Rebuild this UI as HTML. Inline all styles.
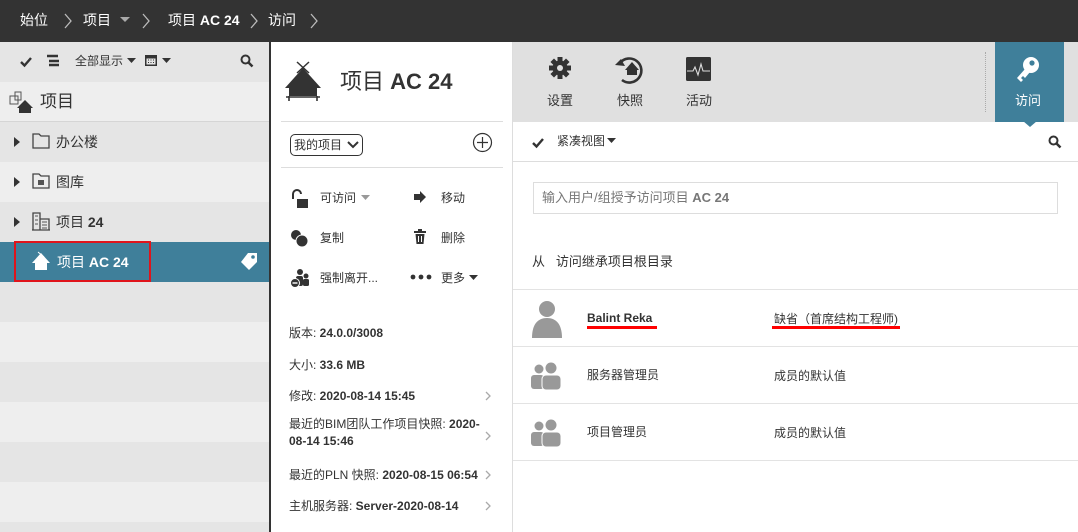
<!DOCTYPE html>
<html><head><meta charset="utf-8"><style>
*{margin:0;padding:0;box-sizing:border-box}
body{width:1078px;height:532px;overflow:hidden;position:relative;background:#fff;font-family:"Liberation Sans","Noto Sans CJK SC",sans-serif;color:#333;font-size:13px}
.a{position:absolute;white-space:nowrap}
b{font-weight:bold}
</style></head><body>
<!-- top bar -->
<div class="a" style="left:0;top:0;width:1078px;height:42px;background:#333"></div>
<div class="a" style="left:20px;top:10px;color:#fff;font-size:14px;line-height:20px">始位</div>
<svg class="a" style="left:62px;top:12px" width="12" height="18"><path d="M3 2l6 7-6 7" stroke="#bbb" stroke-width="1.3" fill="none"/></svg>
<div class="a" style="left:83px;top:10px;color:#fff;font-size:14px;line-height:20px">项目</div>
<svg class="a" style="left:119px;top:16px" width="12" height="8"><path d="M1 1h10L6 6z" fill="#aaa"/></svg>
<svg class="a" style="left:140px;top:12px" width="12" height="18"><path d="M3 2l6 7-6 7" stroke="#bbb" stroke-width="1.3" fill="none"/></svg>
<div class="a" style="left:168px;top:10px;color:#fff;font-size:14px;line-height:20px">项目 <b>AC 24</b></div>
<svg class="a" style="left:248px;top:12px" width="12" height="18"><path d="M3 2l6 7-6 7" stroke="#bbb" stroke-width="1.3" fill="none"/></svg>
<div class="a" style="left:268px;top:10px;color:#fff;font-size:14px;line-height:20px">访问</div>
<svg class="a" style="left:308px;top:12px" width="12" height="18"><path d="M3 2l6 7-6 7" stroke="#bbb" stroke-width="1.3" fill="none"/></svg>

<!-- left panel -->
<div class="a" style="left:0;top:42px;width:269px;height:40px;background:#e5e5e5"></div>
<div class="a" style="left:0;top:82px;width:269px;height:40px;background:#eee;border-bottom:1px solid #d5d5d5"></div>
<div class="a" style="left:0;top:122px;width:269px;height:40px;background:#e5e5e5"></div>
<div class="a" style="left:0;top:162px;width:269px;height:40px;background:#eee"></div>
<div class="a" style="left:0;top:202px;width:269px;height:40px;background:#e5e5e5"></div>
<div class="a" style="left:0;top:242px;width:269px;height:40px;background:#3f7f9a"></div>
<div class="a" style="left:0;top:282px;width:269px;height:40px;background:#e5e5e5"></div>
<div class="a" style="left:0;top:322px;width:269px;height:40px;background:#eee"></div>
<div class="a" style="left:0;top:362px;width:269px;height:40px;background:#e5e5e5"></div>
<div class="a" style="left:0;top:402px;width:269px;height:40px;background:#eee"></div>
<div class="a" style="left:0;top:442px;width:269px;height:40px;background:#e5e5e5"></div>
<div class="a" style="left:0;top:482px;width:269px;height:40px;background:#eee"></div>
<div class="a" style="left:0;top:522px;width:269px;height:10px;background:#e5e5e5"></div>
<div class="a" style="left:269px;top:42px;width:2px;height:490px;background:#333"></div>

<svg class="a" style="left:19px;top:55px" width="14" height="14"><path d="M2 7l3.5 3.5L12 3" stroke="#333" stroke-width="2.4" fill="none"/></svg>
<svg class="a" style="left:46px;top:54px" width="14" height="14"><path d="M1 2h11M3 7h10M3 11h10" stroke="#333" stroke-width="2.4"/></svg>
<div class="a" style="left:75px;top:52px;font-size:12px;line-height:18px">全部显示</div>
<svg class="a" style="left:127px;top:58px" width="10" height="6"><path d="M0 0h9L4.5 5z" fill="#333"/></svg>
<svg class="a" style="left:144px;top:53px" width="14" height="14"><rect x="1" y="2" width="12" height="11" fill="#333"/><rect x="2.5" y="5.5" width="9" height="6" fill="#e5e5e5"/><path d="M4 7h1M6.5 7h1M9 7h1M4 9.5h1M6.5 9.5h1M9 9.5h1" stroke="#333"/></svg>
<svg class="a" style="left:162px;top:58px" width="10" height="6"><path d="M0 0h9L4.5 5z" fill="#333"/></svg>
<svg class="a" style="left:240px;top:54px" width="14" height="14"><circle cx="5.5" cy="5.5" r="4" stroke="#333" stroke-width="2" fill="none"/><path d="M8.5 8.5l4 4" stroke="#333" stroke-width="2.5"/></svg>

<svg class="a" style="left:9px;top:90px" width="24" height="24"><rect x="1" y="6" width="8" height="8" fill="none" stroke="#555"/><rect x="6" y="2" width="6" height="8" fill="none" stroke="#555"/><path d="M8 18l8-8 8 8h-2v5H10v-5z" fill="#333"/></svg>
<div class="a" style="left:40px;top:91px;font-size:17px;line-height:22px">项目</div>

<svg class="a" style="left:13px;top:136px" width="8" height="12"><path d="M1 1l6 5-6 5z" fill="#333"/></svg>
<svg class="a" style="left:32px;top:133px" width="18" height="16"><path d="M1 1h6l2 2h8v12H1z" fill="none" stroke="#444" stroke-width="1.3"/></svg>
<div class="a" style="left:56px;top:132px;font-size:14px;line-height:20px">办公楼</div>
<svg class="a" style="left:13px;top:176px" width="8" height="12"><path d="M1 1l6 5-6 5z" fill="#333"/></svg>
<svg class="a" style="left:32px;top:173px" width="18" height="16"><path d="M1 1h6l2 2h8v12H1z" fill="none" stroke="#444" stroke-width="1.3"/><rect x="6" y="7" width="6" height="5" fill="#555"/></svg>
<div class="a" style="left:56px;top:172px;font-size:14px;line-height:20px">图库</div>
<svg class="a" style="left:13px;top:216px" width="8" height="12"><path d="M1 1l6 5-6 5z" fill="#333"/></svg>
<svg class="a" style="left:31px;top:211px" width="20" height="20"><path d="M2 19V2h7v17M9 8h9v11M1 19h18" fill="none" stroke="#444" stroke-width="1.3"/><path d="M4 5h3M4 9h3M4 13h3M11 11h5M11 14h5M11 17h5" stroke="#555"/></svg>
<div class="a" style="left:56px;top:212px;font-size:14px;line-height:20px">项目 <b>24</b></div>

<div class="a" style="left:14px;top:241px;width:137px;height:41px;border:2px solid #e0141b"></div>
<svg class="a" style="left:31px;top:251px" width="20" height="20"><path d="M10 2l9 10h-3v7H4v-7H1z" fill="#fff"/><path d="M7 1l6 5" stroke="#fff"/></svg>
<div class="a" style="left:57px;top:252px;font-size:14px;line-height:20px;color:#fff">项目 <b>AC 24</b></div>
<svg class="a" style="left:238px;top:251px" width="22" height="20"><path d="M10 2h9v9l-8 8-8-8z" fill="#fff"/><circle cx="15" cy="6" r="1.8" fill="#3f7f9a"/></svg>

<!-- middle panel -->
<svg class="a" style="left:283px;top:60px" width="40" height="42"><path d="M20 8L2 28h4v8h28v-8h4z" fill="#333"/><path d="M14 2l12 11M26 2L14 13" stroke="#333" stroke-width="1.5"/><path d="M3 37h34M6 36v5M34 36v5" stroke="#333" stroke-width="1.6"/></svg>
<div class="a" style="left:340px;top:68px;font-size:22px;line-height:28px;color:#333">项目 <b>AC 24</b></div>
<div class="a" style="left:281px;top:121px;width:222px;height:1px;background:#ddd"></div>
<div class="a" style="left:290px;top:134px;width:73px;height:22px;border:1.3px solid #333;border-radius:5px;font-size:12px;line-height:20px;padding-left:3px">我的项目</div>
<svg class="a" style="left:347px;top:141px" width="12" height="8"><path d="M1 1l5 5 5-5" stroke="#333" stroke-width="2" fill="none"/></svg>
<svg class="a" style="left:472px;top:132px" width="21" height="21"><circle cx="10.5" cy="10.5" r="9" stroke="#333" stroke-width="1.2" fill="none"/><path d="M10.5 5v11M5 10.5h11" stroke="#333" stroke-width="1.2"/></svg>
<div class="a" style="left:281px;top:167px;width:222px;height:1px;background:#ddd"></div>

<svg class="a" style="left:290px;top:189px" width="22" height="20"><path d="M3 10V5a4 4 0 018 0" stroke="#333" stroke-width="2" fill="none"/><rect x="7" y="10" width="11" height="9" fill="#333"/></svg>
<div class="a" style="left:320px;top:189px;font-size:12px;line-height:18px">可访问</div>
<svg class="a" style="left:361px;top:195px" width="10" height="6"><path d="M0 0h9L4.5 5z" fill="#999"/></svg>
<svg class="a" style="left:413px;top:190px" width="14" height="14"><path d="M1 4h6V1l6 6-6 6v-3H1z" fill="#333"/></svg>
<div class="a" style="left:441px;top:189px;font-size:12px;line-height:18px">移动</div>
<svg class="a" style="left:290px;top:228px" width="20" height="20"><circle cx="6" cy="7" r="5" fill="#333"/><circle cx="12" cy="13" r="6" fill="#333" stroke="#fff" stroke-width="1"/></svg>
<div class="a" style="left:320px;top:229px;font-size:12px;line-height:18px">复制</div>
<svg class="a" style="left:413px;top:229px" width="14" height="16"><path d="M1 3h12M5 1h4" stroke="#333" stroke-width="2"/><path d="M2.5 5h9l-1 10h-7z" fill="#333"/><path d="M5.5 7v6M8.5 7v6" stroke="#fff"/></svg>
<div class="a" style="left:441px;top:229px;font-size:12px;line-height:18px">删除</div>
<svg class="a" style="left:290px;top:268px" width="22" height="20"><circle cx="10" cy="4" r="3" fill="#333"/><circle cx="16" cy="8" r="2.5" fill="#333"/><rect x="13" y="11" width="6" height="7" rx="1.5" fill="#333"/><rect x="6" y="8" width="7" height="10" rx="2" fill="#333"/><circle cx="5" cy="15" r="4.5" fill="#333" stroke="#fff"/><path d="M2.5 15h5" stroke="#fff" stroke-width="1.4"/></svg>
<div class="a" style="left:320px;top:269px;font-size:12px;line-height:18px">强制离开...</div>
<svg class="a" style="left:410px;top:274px" width="22" height="6"><circle cx="3" cy="3" r="2.4" fill="#333"/><circle cx="11" cy="3" r="2.4" fill="#333"/><circle cx="19" cy="3" r="2.4" fill="#333"/></svg>
<div class="a" style="left:441px;top:269px;font-size:12px;line-height:18px">更多</div>
<svg class="a" style="left:469px;top:275px" width="10" height="6"><path d="M0 0h9L4.5 5z" fill="#333"/></svg>

<div class="a" style="left:289px;top:324px;font-size:12px;line-height:18px">版本: <b>24.0.0/3008</b></div>
<div class="a" style="left:289px;top:356px;font-size:12px;line-height:18px">大小: <b>33.6 MB</b></div>
<div class="a" style="left:289px;top:387px;font-size:12px;line-height:18px">修改: <b>2020-08-14 15:45</b></div>
<div class="a" style="left:289px;top:416px;font-size:12px;line-height:17px">最近的BIM团队工作项目快照: <b>2020-</b><br><b>08-14 15:46</b></div>
<div class="a" style="left:289px;top:466px;font-size:12px;line-height:18px">最近的PLN 快照: <b>2020-08-15 06:54</b></div>
<div class="a" style="left:289px;top:497px;font-size:12px;line-height:18px">主机服务器: <b>Server-2020-08-14</b></div>
<svg class="a" style="left:484px;top:391px" width="8" height="10"><path d="M2 1l4 4-4 4" stroke="#aaa" stroke-width="1.3" fill="none"/></svg>
<svg class="a" style="left:484px;top:431px" width="8" height="10"><path d="M2 1l4 4-4 4" stroke="#aaa" stroke-width="1.3" fill="none"/></svg>
<svg class="a" style="left:484px;top:470px" width="8" height="10"><path d="M2 1l4 4-4 4" stroke="#aaa" stroke-width="1.3" fill="none"/></svg>
<svg class="a" style="left:484px;top:501px" width="8" height="10"><path d="M2 1l4 4-4 4" stroke="#aaa" stroke-width="1.3" fill="none"/></svg>

<div class="a" style="left:512px;top:42px;width:1px;height:490px;background:#ddd"></div>

<!-- right panel -->
<div class="a" style="left:513px;top:42px;width:565px;height:80px;background:#e0e0e0"></div>
<div class="a" style="left:985px;top:52px;width:0;height:60px;border-left:1px dotted #aaa"></div>
<div class="a" style="left:995px;top:42px;width:69px;height:80px;background:#3f7f9a"></div>
<svg class="a" style="left:1023px;top:121px" width="14" height="8"><path d="M0 0h14L7 6z" fill="#3f7f9a"/></svg>

<svg class="a" style="left:547px;top:55px" width="26" height="26" viewBox="0 0 26 26"><g fill="#333" transform="translate(13 13)"><rect x="-2.5" y="-11" width="5" height="22"/><rect x="-2.5" y="-11" width="5" height="22" transform="rotate(45)"/><rect x="-2.5" y="-11" width="5" height="22" transform="rotate(90)"/><rect x="-2.5" y="-11" width="5" height="22" transform="rotate(135)"/><circle r="7.5"/></g><circle cx="13" cy="13" r="3" fill="#e0e0e0"/></svg>
<div class="a" style="left:547px;top:92px;font-size:13px;line-height:18px">设置</div>
<svg class="a" style="left:612px;top:53px" width="36" height="34"><path d="M8 10a12 12 0 1 1 2 17" stroke="#333" stroke-width="2.6" fill="none"/><path d="M3 12l6-6 4 7z" fill="#333"/><path d="M20 9l-7 8h2v5h10v-5h2z" fill="#333"/></svg>
<div class="a" style="left:617px;top:92px;font-size:13px;line-height:18px">快照</div>
<svg class="a" style="left:686px;top:57px" width="26" height="25"><rect width="25" height="24" rx="1.5" fill="#333"/><path d="M1 14h6l2-4 3 8 3-11 2 7h7" stroke="#ddd" stroke-width="1.1" fill="none"/></svg>
<div class="a" style="left:686px;top:92px;font-size:13px;line-height:18px">活动</div>
<svg class="a" style="left:1015px;top:55px" width="28" height="30"><circle cx="16" cy="10" r="8" fill="#fff"/><circle cx="17" cy="8" r="2.6" fill="#3f7f9a"/><path d="M10 14l-8 9 4 4 2-2-2-2 2-2 2 2 5-6z" fill="#fff"/></svg>
<div class="a" style="left:1015px;top:92px;font-size:13px;line-height:18px;color:#fff">访问</div>

<svg class="a" style="left:531px;top:136px" width="14" height="14"><path d="M2 7l3.5 3.5L12 3" stroke="#333" stroke-width="2.4" fill="none"/></svg>
<div class="a" style="left:557px;top:132px;font-size:12px;line-height:18px">紧凑视图</div>
<svg class="a" style="left:607px;top:138px" width="10" height="6"><path d="M0 0h9L4.5 5z" fill="#333"/></svg>
<svg class="a" style="left:1048px;top:135px" width="14" height="14"><circle cx="5.5" cy="5.5" r="4" stroke="#333" stroke-width="2" fill="none"/><path d="M8.5 8.5l4 4" stroke="#333" stroke-width="2.5"/></svg>
<div class="a" style="left:513px;top:161px;width:565px;height:1px;background:#ddd"></div>

<div class="a" style="left:533px;top:182px;width:525px;height:32px;border:1px solid #ddd"></div>
<div class="a" style="left:542px;top:189px;font-size:13px;line-height:18px;color:#777">输入用户/组授予访问项目 <b>AC 24</b></div>

<div class="a" style="left:532px;top:253px;font-size:13px;line-height:18px">从&nbsp;&nbsp;&nbsp;访问继承项目根目录</div>
<div class="a" style="left:513px;top:289px;width:565px;height:1px;background:#e3e3e3"></div>

<svg class="a" style="left:531px;top:300px" width="32" height="40"><circle cx="16" cy="9" r="8" fill="#999"/><path d="M1 38c0-14 6-20 15-20s15 6 15 20z" fill="#999"/></svg>
<div class="a" style="left:587px;top:309px;font-size:12px;line-height:18px;font-weight:bold">Balint Reka</div>
<div class="a" style="left:587px;top:326px;width:70px;height:3px;background:#f00"></div>
<div class="a" style="left:774px;top:310px;font-size:12px;line-height:18px">缺省（首席结构工程师)</div>
<div class="a" style="left:772px;top:326px;width:128px;height:3px;background:#f00"></div>
<div class="a" style="left:513px;top:346px;width:565px;height:1px;background:#e3e3e3"></div>

<svg class="a" style="left:530px;top:362px" width="32" height="28"><circle cx="9" cy="7" r="4.5" fill="#999"/><rect x="1" y="13" width="13" height="14" rx="3" fill="#999"/><circle cx="21" cy="6" r="5.5" fill="#999"/><rect x="12" y="13" width="19" height="15" rx="4" fill="#999" stroke="#fff"/></svg>
<div class="a" style="left:587px;top:366px;font-size:12px;line-height:18px">服务器管理员</div>
<div class="a" style="left:774px;top:367px;font-size:12px;line-height:18px">成员的默认值</div>
<div class="a" style="left:513px;top:403px;width:565px;height:1px;background:#e3e3e3"></div>
<svg class="a" style="left:530px;top:419px" width="32" height="28"><circle cx="9" cy="7" r="4.5" fill="#999"/><rect x="1" y="13" width="13" height="14" rx="3" fill="#999"/><circle cx="21" cy="6" r="5.5" fill="#999"/><rect x="12" y="13" width="19" height="15" rx="4" fill="#999" stroke="#fff"/></svg>
<div class="a" style="left:587px;top:423px;font-size:12px;line-height:18px">项目管理员</div>
<div class="a" style="left:774px;top:424px;font-size:12px;line-height:18px">成员的默认值</div>
<div class="a" style="left:513px;top:460px;width:565px;height:1px;background:#e3e3e3"></div>
</body></html>
